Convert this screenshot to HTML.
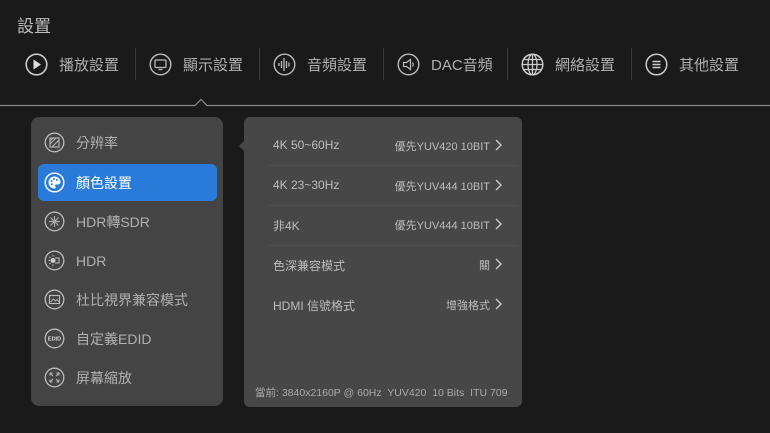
<!DOCTYPE html>
<html><head><meta charset="utf-8"><style>
*{margin:0;padding:0;box-sizing:border-box}
body{width:770px;height:433px;background:#1a1a1a;overflow:hidden;position:relative;font-family:"Liberation Sans","Noto Sans CJK TC",sans-serif;color:#bbb}
.a{position:absolute}
.title{left:17px;top:12px;font-size:17px;color:#bdbdbd}
.tab{top:52px;height:24px;display:flex;align-items:center;font-size:15px;color:#b0b0b0}
.tab svg{margin-right:11px}
.div{top:48px;width:1px;height:32px;background:#3a3a3a}
.lp{left:31px;top:117px;width:192px;height:289px;background:#444;border-radius:8px}
.li{left:7px;width:179px;height:37px;display:flex;align-items:center;padding-left:6px;font-size:14px;color:#b0b0b0;border-radius:6px}
.li svg{margin-right:11px}
.sel{background:#2a7bd9;color:#fff}
.rp{left:244px;top:117px;width:278px;height:290px;background:#474747;border-radius:6px}
.ri{left:0;width:278px;height:40px;font-size:12px;color:#bdbdbd}
.ri .l{position:absolute;left:29px;top:13px}
.ri .v{position:absolute;right:32px;top:13px;font-size:11px}
.ri svg{position:absolute;right:20px;top:14px}
.sep{left:24px;width:250px;height:1px;background:#4f4f4f}
</style></head><body>
<div class="a title">設置</div>

<div class="a tab" style="left:25px"><svg width="23" height="23" viewBox="0 0 23 23"><circle cx="11.5" cy="11.5" r="10.3" fill="none" stroke="#ccc" stroke-width="1.6"/><path d="M8.5 6.5L16 11.5 8.5 16.5Z" fill="#ddd"/></svg>播放設置</div>
<div class="a div" style="left:135px"></div>
<div class="a tab" style="left:149px"><svg width="23" height="23" viewBox="0 0 23 23"><circle cx="11.5" cy="11.5" r="10.3" fill="none" stroke="#bbb" stroke-width="1.4"/><rect x="6" y="7" width="11" height="7.5" rx="1" fill="none" stroke="#bbb" stroke-width="1.3"/><path d="M9.5 16.5h4" stroke="#bbb" stroke-width="1.3"/></svg>顯示設置</div>
<div class="a div" style="left:259px"></div>
<div class="a tab" style="left:273px"><svg width="23" height="23" viewBox="0 0 23 23"><circle cx="11.5" cy="11.5" r="10.3" fill="none" stroke="#bbb" stroke-width="1.4"/><path d="M6 10v3M8.5 8v7M11 5v13M13.5 8v7M16 9.5v4" stroke="#bbb" stroke-width="1.3"/></svg>音頻設置</div>
<div class="a div" style="left:383px"></div>
<div class="a tab" style="left:397px"><svg width="23" height="23" viewBox="0 0 23 23"><circle cx="11.5" cy="11.5" r="10.3" fill="none" stroke="#bbb" stroke-width="1.4"/><path d="M6.5 9.5h3l4-3v10l-4-3h-3z" fill="none" stroke="#bbb" stroke-width="1.2"/><path d="M15.5 9.5q1.5 2 0 4" fill="none" stroke="#bbb" stroke-width="1.2"/></svg>DAC音頻</div>
<div class="a div" style="left:507px"></div>
<div class="a tab" style="left:521px"><svg width="23" height="23" viewBox="0 0 23 23"><circle cx="11.5" cy="11.5" r="10.3" fill="none" stroke="#ccc" stroke-width="1.5"/><ellipse cx="11.5" cy="11.5" rx="4.5" ry="10.3" fill="none" stroke="#ccc" stroke-width="1.3"/><path d="M11.5 1.2v20.6M1.2 11.5h20.6M3 6.5h17M3 16.5h17" stroke="#ccc" stroke-width="1.3"/></svg>網絡設置</div>
<div class="a div" style="left:631px"></div>
<div class="a tab" style="left:645px"><svg width="23" height="23" viewBox="0 0 23 23"><circle cx="11.5" cy="11.5" r="10.3" fill="none" stroke="#ccc" stroke-width="1.5"/><path d="M7.5 8.5h8M7.5 11.5h8M7.5 14.5h8" stroke="#ccc" stroke-width="1.5"/></svg>其他設置</div>

<svg class="a" style="left:0;top:97px" width="770" height="10"><path d="M0 8.5H195L201 2.5 207 8.5H770" fill="none" stroke="#8a8a8a" stroke-width="1.2"/></svg>

<div class="a lp">
<div class="a li" style="top:7px"><svg width="21" height="21" viewBox="0 0 21 21"><circle cx="10.5" cy="10.5" r="9.3" fill="none" stroke="#bbb" stroke-width="1.3"/><rect x="6" y="6" width="9" height="9" fill="none" stroke="#bbb" stroke-width="1.1"/><path d="M6 12L12 6M6 9L9 6M8 15l7-7" stroke="#bbb" stroke-width=".9"/></svg>分辨率</div>
<div class="a li sel" style="top:47px"><svg width="21" height="21" viewBox="0 0 21 21"><circle cx="10.5" cy="10.5" r="9.3" fill="none" stroke="#fff" stroke-width="1.4"/><path d="M10.5 4.5a6 6 0 1 0 0 12c1.5 0 1.5-1.5.8-2.3-.6-.8 0-1.700 1-1.7h1.7a2.5 2.5 0 0 0 2.5-2.5c0-3-2.7-5.5-6-5.5z" fill="#fff"/><circle cx="7.5" cy="9" r="1" fill="#2a7bd9"/><circle cx="10" cy="7" r="1" fill="#2a7bd9"/><circle cx="13" cy="8" r="1" fill="#2a7bd9"/><circle cx="7.8" cy="12.3" r="1" fill="#2a7bd9"/></svg>顏色設置</div>
<div class="a li" style="top:86px"><svg width="21" height="21" viewBox="0 0 21 21"><circle cx="10.5" cy="10.5" r="9.3" fill="none" stroke="#bbb" stroke-width="1.3"/><path d="M10.5 5v11M5 10.5h11M6.5 6.5l8 8M14.5 6.5l-8 8" stroke="#aaa" stroke-width="1.2"/></svg>HDR轉SDR</div>
<div class="a li" style="top:125px"><svg width="21" height="21" viewBox="0 0 21 21"><circle cx="10.5" cy="10.5" r="9.3" fill="none" stroke="#bbb" stroke-width="1.3"/><circle cx="9" cy="10.5" r="2.5" fill="#ccc"/><path d="M11 8h4v5h-4M9 5v1.5M9 14.5V16M4.5 10.5H6M5.5 7l1 1M5.5 14l1-1" stroke="#bbb" stroke-width="1.1" fill="none"/></svg>HDR</div>
<div class="a li" style="top:164px"><svg width="21" height="21" viewBox="0 0 21 21"><circle cx="10.5" cy="10.5" r="9.3" fill="none" stroke="#bbb" stroke-width="1.3"/><rect x="5.5" y="6.5" width="10" height="8" fill="none" stroke="#bbb" stroke-width="1.1"/><path d="M6.5 13l3-3 2 2 1.5-1.5 2 2.5" fill="none" stroke="#bbb" stroke-width=".9"/></svg>杜比視界兼容模式</div>
<div class="a li" style="top:203px"><svg width="21" height="21" viewBox="0 0 21 21"><circle cx="10.5" cy="10.5" r="9.3" fill="none" stroke="#bbb" stroke-width="1.3"/><text x="10.5" y="12.5" font-size="5.5" font-weight="bold" fill="#ddd" text-anchor="middle" font-family="Liberation Sans">EDID</text></svg>自定義EDID</div>
<div class="a li" style="top:242px"><svg width="21" height="21" viewBox="0 0 21 21"><circle cx="10.5" cy="10.5" r="9.3" fill="none" stroke="#bbb" stroke-width="1.3"/><path d="M6 6l3 3M6 6h2.5M6 6v2.5M15 6l-3 3M15 6h-2.5M15 6v2.5M6 15l3-3M6 15h2.5M6 15v-2.5M15 15l-3-3M15 15h-2.5M15 15v-2.5" stroke="#bbb" stroke-width="1" fill="none"/></svg>屏幕縮放</div>
</div>

<div class="a rp">
<svg class="a" style="left:-5px;top:23px" width="6" height="12"><path d="M6 0L0 6 6 12Z" fill="#474747"/></svg>
<div class="a ri" style="top:8px"><span class="l">4K 50~60Hz</span><span class="v">優先YUV420 10BIT</span><svg width="7" height="12"><path d="M1 1l5 5-5 5" fill="none" stroke="#ccc" stroke-width="1.4"/></svg></div>
<div class="a sep" style="top:48px"></div>
<div class="a ri" style="top:48px"><span class="l">4K 23~30Hz</span><span class="v">優先YUV444 10BIT</span><svg width="7" height="12"><path d="M1 1l5 5-5 5" fill="none" stroke="#ccc" stroke-width="1.4"/></svg></div>
<div class="a sep" style="top:88px"></div>
<div class="a ri" style="top:87px"><span class="l">非4K</span><span class="v">優先YUV444 10BIT</span><svg width="7" height="12"><path d="M1 1l5 5-5 5" fill="none" stroke="#ccc" stroke-width="1.4"/></svg></div>
<div class="a sep" style="top:128px"></div>
<div class="a ri" style="top:127px"><span class="l">色深兼容模式</span><span class="v">關</span><svg width="7" height="12"><path d="M1 1l5 5-5 5" fill="none" stroke="#ccc" stroke-width="1.4"/></svg></div>
<div class="a ri" style="top:167px"><span class="l">HDMI 信號格式</span><span class="v">增強格式</span><svg width="7" height="12"><path d="M1 1l5 5-5 5" fill="none" stroke="#ccc" stroke-width="1.4"/></svg></div>
<div class="a" style="left:11px;top:268px;font-size:10.5px;color:#aaa;white-space:nowrap">當前: 3840x2160P @ 60Hz&nbsp; YUV420&nbsp; 10 Bits&nbsp; ITU 709</div>
</div>
</body></html>
